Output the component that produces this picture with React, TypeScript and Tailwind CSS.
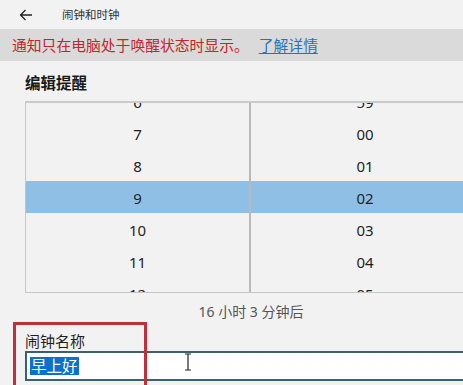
import React from "react";

const font = { fontFamily: '"Noto Sans", "Noto Sans CJK SC", sans-serif' };

const left = ["6", "7", "8", "9", "10", "11", "12"];
const right = ["59", "00", "01", "02", "03", "04", "05"];

function Column({ items, width, border }: { items: string[]; width: string; border?: boolean }) {
  return (
    <div className={`relative h-full overflow-hidden ${width} ${border ? "border-r-2 border-[#b9b9b9]" : ""}`}>
      <div className="-mt-[18px] flex flex-col">
        {items.map((v, i) => (
          <div
            key={v}
            className={`flex h-[32px] items-center justify-center pt-[2px] text-[15px] text-[#1f1f1f] ${i === 3 ? "bg-[#90bfe5]" : ""}`}
          >
            {v}
          </div>
        ))}
      </div>
    </div>
  );
}

export default function App() {
  return (
    <div className="relative h-[385px] w-[463px] overflow-hidden bg-[#f2f2f2]" style={font}>
      <div className="flex h-[29px] items-center">
        <svg width="14" height="12" viewBox="0 0 14 12" className="ml-[19px]">
          <path d="M13 6H1.5M6.5 1L1.5 6l5 5" fill="none" stroke="#222" strokeWidth="1.3" />
        </svg>
        <span className="ml-[29px] text-[11.5px] text-[#333]">闹钟和时钟</span>
      </div>
      <div className="flex h-[32px] items-center bg-[#dadada] pl-[12px] text-[14.8px]">
        <span className="text-[#c0262d]">通知只在电脑处于唤醒状态时显示。</span>
        <span className="ml-[10px] text-[#2a72b8] underline underline-offset-2">了解详情</span>
      </div>
      <div className="ml-[25px] mt-[11px] text-[15.5px] font-bold leading-[22px] text-[#1a1a1a]">编辑提醒</div>
      <div className="ml-[25px] mt-[7px] flex h-[192px] w-[470px] border border-[#c6c6c6] border-t-2 border-t-[#cacaca]">
        <Column items={left} width="w-[225px]" border />
        <Column items={right} width="w-[228px]" />
      </div>
      <div className="mt-[8px] flex h-[20px] w-[502px] items-center justify-center text-[14px] text-[#555]">
        16 小时 3 分钟后
      </div>
      <div className="ml-[25px] mt-[10px] text-[15px] leading-[20px] text-[#1f1f1f]">闹钟名称</div>
      <div className="ml-[25px] flex h-[30px] w-[460px] items-center border-2 border-[#3b6170] bg-white pl-[3px]">
        <span className="bg-[#0a72cc] px-[1px] text-[15.5px] leading-[18px] text-white">早上好</span>
      </div>
      <svg width="8" height="18" viewBox="0 0 8 18" className="absolute left-[184px] top-[353px]">
        <path d="M1 1h6M4 1v16M1 17h6" fill="none" stroke="#222" strokeWidth="1.2" />
      </svg>
      <div className="absolute left-[13px] top-[322px] h-[80px] w-[134px] border-[3px] border-[#c0303a]" />
    </div>
  );
}
